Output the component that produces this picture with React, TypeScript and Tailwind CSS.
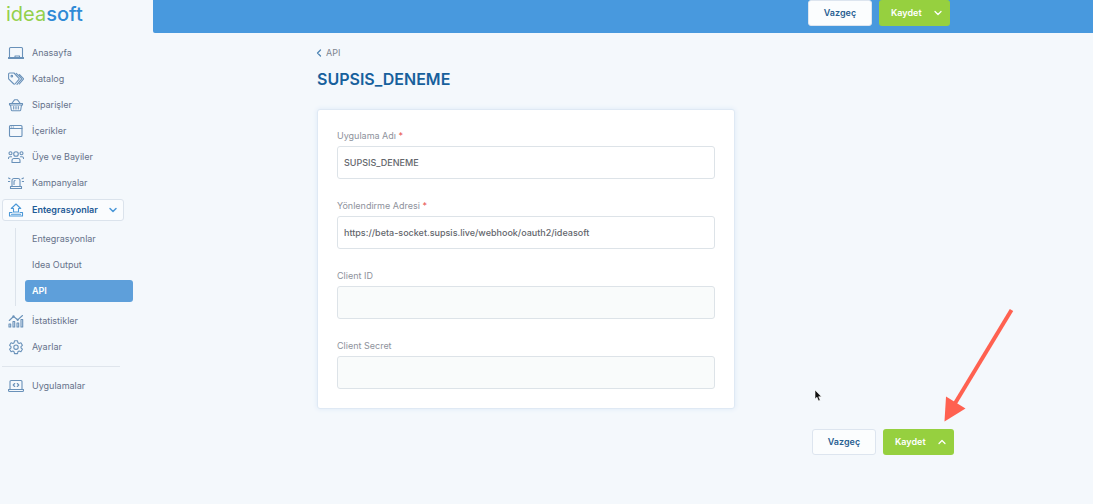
import type { ReactNode } from 'react';
import { ChevronDown, ChevronLeft, ChevronUp } from 'lucide-react';

type IconProps = { children: ReactNode };

function Icon({ children }: IconProps) {
  return (
    <svg
      viewBox="0 0 16 16"
      className="size-4 shrink-0"
      fill="none"
      stroke="currentColor"
      strokeWidth="1.1"
      strokeLinecap="round"
      strokeLinejoin="round"
      aria-hidden="true"
    >
      {children}
    </svg>
  );
}

const mainItems = [
  {
    label: 'Anasayfa',
    icon: <path d="M1.500 12.500v-9a1 1 0 0 1 1-1h11a1 1 0 0 1 1 1v9M.5 12.500h15v1H.5zM7 12.500V11h4.500v1.500" />,
  },
  {
    label: 'Katalog',
    icon: (
      <>
        <path d="M.6 3a1 1 0 0 1 1-1H6l5 5.300a.8.8 0 0 1 0 1.100L7 13a.8.8 0 0 1-1.200 0L.6 7.800zM8.300 2.300l5 5a.8.8 0 0 1 0 1.100L9 13.300M11.300 3.500l3.900 3.800a.8.8 0 0 1 0 1.100L11.300 13" />
        <circle cx="3.800" cy="5.200" r=".8" />
      </>
    ),
  },
  {
    label: 'Siparişler',
    icon: <path d="M1.500 6.500h13V8h-13zM2.500 8l.8 5a1 1 0 0 0 1 .8h7.400a1 1 0 0 0 1-.8l.8-5M3.700 6.500l2.800-3.700h3l2.800 3.700M5.700 9.500v2.500M8 9.500v2.500M10.300 9.500v2.500" />,
  },
  {
    label: 'İçerikler',
    icon: (
      <>
        <rect x="1.500" y="2.500" width="12.500" height="11" rx="1" />
        <path d="M1.500 5.500H14M3.300 4h.4M5.300 4h.3" />
      </>
    ),
  },
  {
    label: 'Üye ve Bayiler',
    icon: (
      <>
        <circle cx="8" cy="5" r="2.300" />
        <circle cx="2.500" cy="4.300" r="1.500" />
        <circle cx="13.500" cy="4.300" r="1.500" />
        <path d="M4 13.500v-2a2 2 0 0 1 2-2h4a2 2 0 0 1 2 2v2zM.5 9.500V9A1.500 1.500 0 0 1 2 7.700h1.500M15.500 9.500V9A1.500 1.500 0 0 0 14 7.700h-1.500" />
      </>
    ),
  },
  {
    label: 'Kampanyalar',
    icon: <path d="M4 11.500V5.500a2 2 0 0 1 2-2h4a2 2 0 0 1 2 2v6M2.500 11.500h11v2h-11zM6 9.500V6.500a1 1 0 0 1 1-1M.5 3l1.500.7M15.500 3l-1.500.7M.3 6.500h1.400M14.300 6.500h1.400" />,
  },
];

const subItems = ['Entegrasyonlar', 'Idea Output', 'API'];

const lowerItems = [
  {
    label: 'İstatistikler',
    icon: (
      <>
        <path d="M1 14v-3h1.700v3zM5 14V8.500h1.700V14zM9 14v-4h1.700v4zM13 14V6.500h1.700V14z" />
        <path d="M1.300 7.500l4.200-4 4.200 3.300 4.800-4.300" />
        <circle cx="5.500" cy="3.500" r=".6" />
        <circle cx="9.700" cy="6.800" r=".6" />
      </>
    ),
  },
  {
    label: 'Ayarlar',
    icon: (
      <>
        <path d="M6.500 1.800h3l.4 1.900 1.200.7 1.800-.6 1.500 2.500-1.400 1.300v1.300l1.400 1.300-1.500 2.500-1.800-.6-1.200.7-.4 1.800h-3l-.4-1.800-1.200-.7-1.800.6-1.500-2.500L3 8.900V7.600L1.600 6.300l1.500-2.500 1.800.6 1.200-.7z" />
        <circle cx="8" cy="8.200" r="2.200" />
      </>
    ),
  },
];

function NavItem({ label, icon }: { label: string; icon: ReactNode }) {
  return (
    <li>
      <a href="#" className="flex h-[22px] items-center gap-2 pl-2 text-[9px] text-[#66728a]">
        <span className="text-[#6991b9]">
          <Icon>{icon}</Icon>
        </span>
        {label}
      </a>
    </li>
  );
}

function Sidebar() {
  return (
    <aside className="w-[153px] shrink-0">
      <a href="#" className="block pt-[2px] pl-[6px] text-[20px] leading-6 font-medium text-[#2f8ad6]">
        <span className="font-normal text-[#93d04b]">idea</span>soft
      </a>
      <nav className="pt-4">
        <ul className="flex flex-col gap-1">
          {mainItems.map((item) => (
            <NavItem key={item.label} {...item} />
          ))}
          <li className="pt-px">
            <button
              type="button"
              className="ml-[2px] flex h-[22px] w-[122px] items-center gap-2 rounded-[3px] border border-[#dbe3ec] bg-[#fafcfe] pr-1 pl-[5px] text-[9px] font-semibold text-[#1d5a96]"
            >
              <span className="text-[#4b98d8]">
                <Icon>
                  <path d="M5.500 10V6.500H3.300L8 2l4.700 4.500h-2.200V10zM4 10.500H1.500v3.500h13v-3.500H12M3.500 12.300h9" />
                </Icon>
              </span>
              <span className="flex-1 text-left">Entegrasyonlar</span>
              <ChevronDown className="size-3 text-[#4b98d8]" strokeWidth={3} />
            </button>
            <ul className="mt-[7px] ml-[15px] flex flex-col gap-1 border-l border-[#dce3eb] pb-1 pl-[9px]">
              {subItems.map((label) => (
                <li key={label}>
                  <a
                    href="#"
                    className={
                      label === 'API'
                        ? 'flex h-[22px] w-[108px] items-center rounded-[3px] bg-[#5e9fda] pl-[7px] text-[9px] font-semibold text-white'
                        : 'flex h-[22px] items-center pl-[7px] text-[9px] text-[#66728a]'
                    }
                  >
                    {label}
                  </a>
                </li>
              ))}
            </ul>
          </li>
          {lowerItems.map((item) => (
            <NavItem key={item.label} {...item} />
          ))}
        </ul>
        <ul className="mt-2 mr-[33px] ml-[2px] border-t border-[#dfe5ec] pt-2">
          <li>
            <a href="#" className="flex h-[22px] items-center gap-2 pl-[6px] text-[9px] text-[#66728a]">
              <span className="text-[#6991b9]">
                <Icon>
                  <path d="M2 11.500V3.500a1 1 0 0 1 1-1h10a1 1 0 0 1 1 1v8M.5 11.500h15v1a1 1 0 0 1-1 1h-13a1 1 0 0 1-1-1zM6.700 5.500L5.200 7l1.500 1.500M9.300 5.500L10.800 7 9.300 8.500" />
                </Icon>
              </span>
              Uygulamalar
            </a>
          </li>
        </ul>
      </nav>
    </aside>
  );
}

function Actions({ up = false }: { up?: boolean }) {
  const Chevron = up ? ChevronUp : ChevronDown;
  return (
    <div className="flex justify-end gap-[7px] text-[9px] font-semibold">
      <button
        type="button"
        className="h-[26px] w-16 rounded-[3px] border border-[#dde5ef] bg-[#fbfdfe] text-[#2a5f92]"
      >
        Vazgeç
      </button>
      <button
        type="button"
        className="flex h-[26px] w-[71px] items-center justify-between rounded-[3px] bg-[#96d03f] pr-[6px] pl-3 text-white"
      >
        Kaydet
        <Chevron className="size-3" strokeWidth={2.5} />
      </button>
    </div>
  );
}

type FieldProps = {
  id: string;
  label: string;
  value?: string;
  required?: boolean;
};

function Field({ id, label, value, required }: FieldProps) {
  return (
    <div>
      <label htmlFor={id} className="block pb-[3px] text-[9px] leading-[14px] text-[#8e929c]">
        {label}
        {required && <span className="text-[#e8504f]"> *</span>}
      </label>
      <input
        id={id}
        type="text"
        defaultValue={value}
        disabled={!value}
        className="block h-[33px] w-full rounded-[3px] border border-[#dde3e8] bg-white px-[6px] text-[9px] font-medium text-[#63666c] disabled:bg-[#f9fbfb]"
      />
    </div>
  );
}

export default function App() {
  return (
    <div className="relative flex min-h-screen bg-[#f4f8fc] font-['Inter',sans-serif]">
      <Sidebar />
      <div className="min-w-0 flex-1">
        <header className="h-[33px] rounded-bl-[2px] bg-[#4899de] pr-[143px]">
          <Actions />
        </header>
        <main className="pt-[14px] pr-[139px] pl-[164px]">
          <a href="#" className="flex items-center text-[9px] leading-3 text-[#7d8490]">
            <ChevronLeft className="-ml-1 size-3 text-[#4f86b5]" strokeWidth={2.5} />
            <span className="pl-px">API</span>
          </a>
          <h1 className="mt-[10px] text-[16px] leading-5 font-semibold text-[#17609c]">SUPSIS_DENEME</h1>
          <form onSubmit={(e) => e.preventDefault()}>
            <div className="mt-5 flex max-w-[418px] flex-col gap-5 rounded-[3px] border border-[#dfe9f4] bg-white p-[19px] shadow-[0_0_5px_#dce9f7]">
              <Field id="app-name" label="Uygulama Adı" value="SUPSIS_DENEME" required />
              <Field
                id="redirect-url"
                label="Yönlendirme Adresi"
                value="https://beta-socket.supsis.live/webhook/oauth2/ideasoft"
                required
              />
              <Field id="client-id" label="Client ID" />
              <Field id="client-secret" label="Client Secret" />
            </div>
            <div className="pt-5">
              <Actions up />
            </div>
          </form>
        </main>
      </div>
      <svg className="absolute top-[388px] left-[813px] h-4 w-3" viewBox="0 0 12 16" aria-hidden="true">
        <path d="M2 2v9l2-1.800L5.500 13l1.700-.8L5.700 8.700h2.800z" fill="#111" stroke="#fff" strokeWidth=".6" />
      </svg>
      <svg className="absolute top-[306px] left-[940px] h-[118px] w-[76px]" viewBox="0 0 76 118" aria-hidden="true">
        <path d="M71.500 4L14 99" stroke="#ff6150" strokeWidth="4" />
        <path d="M4.500 115.500L6 90.500l19.500 12z" fill="#ff6150" />
      </svg>
    </div>
  );
}
